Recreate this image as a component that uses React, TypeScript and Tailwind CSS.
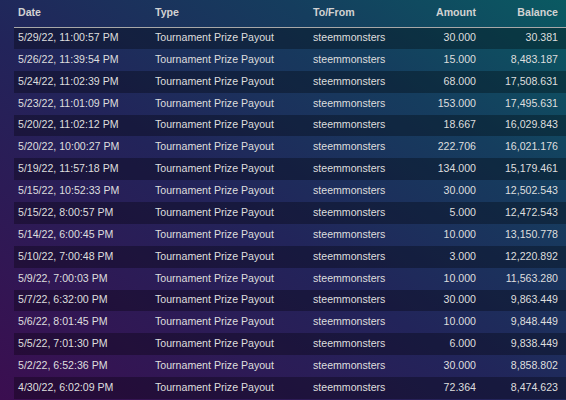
const rows = [
  ["5/29/22, 11:00:57 PM", "30.000", "30.381"],
  ["5/26/22, 11:39:54 PM", "15.000", "8,483.187"],
  ["5/24/22, 11:02:39 PM", "68.000", "17,508.631"],
  ["5/23/22, 11:01:09 PM", "153.000", "17,495.631"],
  ["5/20/22, 11:02:12 PM", "18.667", "16,029.843"],
  ["5/20/22, 10:00:27 PM", "222.706", "16,021.176"],
  ["5/19/22, 11:57:18 PM", "134.000", "15,179.461"],
  ["5/15/22, 10:52:33 PM", "30.000", "12,502.543"],
  ["5/15/22, 8:00:57 PM", "5.000", "12,472.543"],
  ["5/14/22, 6:00:45 PM", "10.000", "13,150.778"],
  ["5/10/22, 7:00:48 PM", "3.000", "12,220.892"],
  ["5/9/22, 7:00:03 PM", "10.000", "11,563.280"],
  ["5/7/22, 6:32:00 PM", "30.000", "9,863.449"],
  ["5/6/22, 8:01:45 PM", "10.000", "9,848.449"],
  ["5/5/22, 7:01:30 PM", "6.000", "9,838.449"],
  ["5/2/22, 6:52:36 PM", "30.000", "8,858.802"],
  ["4/30/22, 6:02:09 PM", "72.364", "8,474.623"],
];

export default function App() {
  return (
    <div className="h-[400px] w-[566px] overflow-hidden bg-[linear-gradient(to_top_right,#3b0e50,#22245a_45%,#153d5e_75%,#0a5a62)] pl-[14px] font-['Liberation_Sans',Arial,sans-serif] text-[10.6px] text-[#dedede]">
      <table className="w-[552px] table-fixed border-collapse">
        <colgroup>
          <col className="w-[137px]" />
          <col className="w-[158px]" />
          <col className="w-[100px]" />
          <col className="w-[71px]" />
          <col className="w-[86px]" />
        </colgroup>
        <thead>
          <tr className="h-[27px] border-b border-[#a8a8a8] text-[#d2d2d2]">
            <th className="pl-1 text-left font-bold">Date</th>
            <th className="pl-1 text-left font-bold">Type</th>
            <th className="pl-1 text-left font-bold">To/From</th>
            <th className="pr-1 text-right font-bold">Amount</th>
            <th className="pr-2 text-right font-bold">Balance</th>
          </tr>
        </thead>
        <tbody>
          {rows.map(([date, amount, balance], i) => (
            <tr key={i} className={`h-[21.875px] ${i % 2 === 0 ? "bg-black/30" : ""}`}>
              <td className="pl-1 whitespace-nowrap">{date}</td>
              <td className="pl-1 whitespace-nowrap">Tournament Prize Payout</td>
              <td className="pl-1">steemmonsters</td>
              <td className="pr-1 text-right">{amount}</td>
              <td className="pr-2 text-right">{balance}</td>
            </tr>
          ))}
        </tbody>
      </table>
    </div>
  );
}
